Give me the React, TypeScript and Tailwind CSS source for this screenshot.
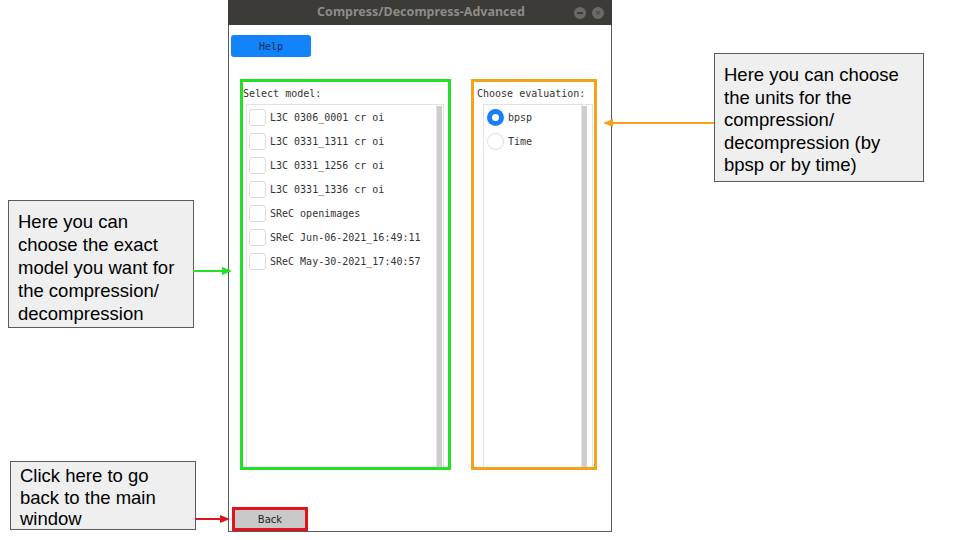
const models = [
  'L3C 0306_0001 cr oi',
  'L3C 0331_1311 cr oi',
  'L3C 0331_1256 cr oi',
  'L3C 0331_1336 cr oi',
  'SReC openimages',
  'SReC Jun-06-2021_16:49:11',
  'SReC May-30-2021_17:40:57',
];

const mono = { fontFamily: '"DejaVu Sans Mono", "Liberation Mono", monospace' };

const Note = ({ className, lines }: { className: string; lines: string[] }) => (
  <div
    className={`border border-[#5b5b5b] bg-[#efefef] px-[9px] text-[18.5px] text-black ${className}`}
    style={{ fontFamily: '"Liberation Sans", Arial, sans-serif' }}
  >
    {lines.map((l) => (
      <div key={l}>{l}</div>
    ))}
  </div>
);

const Arrow = ({
  className,
  color,
  width,
  left,
}: {
  className: string;
  color: string;
  width: number;
  left?: boolean;
}) => (
  <svg className={`absolute ${className}`} width={width} height={10} viewBox={`0 0 ${width} 10`}>
    {left ? (
      <>
        <line x1={8} y1={5} x2={width} y2={5} stroke={color} strokeWidth={2} />
        <polygon points={`0,5 10,1 10,9`} fill={color} />
      </>
    ) : (
      <>
        <line x1={0} y1={5} x2={width - 8} y2={5} stroke={color} strokeWidth={2} />
        <polygon points={`${width},5 ${width - 10},1 ${width - 10},9`} fill={color} />
      </>
    )}
  </svg>
);

export default function App() {
  return (
    <div className="relative flex h-[540px] w-[960px] overflow-hidden bg-white">
      <div className="flex w-[228px] shrink-0 flex-col">
        <Note
          className="ml-[8px] mt-[200px] h-[128px] w-[186px] pt-[9px] leading-[23px]"
          lines={['Here you can', 'choose the exact', 'model you want for', 'the compression/', 'decompression']}
        />
        <Note
          className="ml-[10px] mt-[133px] h-[69px] w-[186px] pt-[3px] leading-[21.5px]"
          lines={['Click here to go', 'back to the main', 'window']}
        />
      </div>

      <div className="flex h-[532px] w-[384px] shrink-0 flex-col border-x border-b border-[#5a5a5a]">
        <div className="-mx-px flex h-[25px] shrink-0 items-center bg-[#3c3b37]">
          <div
            className="flex-1 pl-[40px] text-center text-[12.5px] font-bold text-[#8d8c87]"
            style={{ fontFamily: '"Noto Sans", "DejaVu Sans", sans-serif' }}
          >
            Compress/Decompress-Advanced
          </div>
          <div className="mr-[8px] flex gap-[6px]">
            <div className="flex h-[12px] w-[12px] items-center justify-center rounded-full bg-[#6a6a65]">
              <div className="h-[2px] w-[6px] bg-[#3c3b37]" />
            </div>
            <div className="flex h-[12px] w-[12px] items-center justify-center rounded-full bg-[#6a6a65] text-[9px] leading-none text-[#3c3b37]">
              ×
            </div>
          </div>
        </div>

        <div className="flex flex-1 flex-col text-[10px] text-[#333]" style={mono}>
          <div className="ml-[2px] mt-[10px] flex h-[22px] w-[80px] items-center justify-center rounded-[3px] bg-[#1283fb] text-[#1c2a50]">
            Help
          </div>

          <div className="ml-[11px] mt-[22px] flex gap-[20px]">
            <div className="flex h-[391px] w-[211px] flex-col border-[3px] border-[#22e022]">
              <div className="pt-[6px] leading-[12px]">Select model:</div>
              <div className="ml-[3px] mr-[4px] mt-[4px] flex flex-1 border-x border-t border-[#e2e2e2]">
                <div className="flex flex-1 flex-col pl-[2px]">
                  {models.map((m) => (
                    <div key={m} className="flex h-[24px] items-center gap-[4px]">
                      <div className="h-[17px] w-[17px] rounded-[3px] border border-[#dcdcdc] bg-white" />
                      <span>{m}</span>
                    </div>
                  ))}
                </div>
                <div className="flex w-[7px] border-l border-[#e6e6e6] pt-[1px]">
                  <div className="w-[5px] bg-[#cdcdcd]" />
                </div>
              </div>
            </div>

            <div className="flex h-[391px] w-[126px] flex-col border-[3px] border-[#f5a11c]">
              <div className="pl-[3px] pt-[6px] leading-[12px]">Choose evaluation:</div>
              <div className="ml-[9px] mr-[1px] mt-[4px] flex flex-1 border-x border-t border-[#e2e2e2]">
                <div className="flex flex-1 flex-col pl-[3px]">
                  <div className="flex h-[24px] items-center gap-[4px]">
                    <div className="flex h-[17px] w-[17px] items-center justify-center rounded-full bg-[#1a7ff7]">
                      <div className="h-[7px] w-[7px] rounded-full bg-white" />
                    </div>
                    <span>bpsp</span>
                  </div>
                  <div className="flex h-[24px] items-center gap-[4px]">
                    <div className="h-[17px] w-[17px] rounded-full border border-[#dcdcdc] bg-white" />
                    <span>Time</span>
                  </div>
                </div>
                <div className="mr-[4px] flex w-[7px] border-l border-[#e6e6e6] pt-[1px]">
                  <div className="w-[5px] bg-[#cdcdcd]" />
                </div>
              </div>
            </div>
          </div>

          <div
            className="ml-[3px] mt-auto flex h-[24px] w-[76px] items-center justify-center border-[3px] border-[#e0121c] bg-[#c9c9c9] text-[10px] text-[#222]"
            style={{ fontFamily: '"DejaVu Sans", sans-serif' }}
          >
            Back
          </div>
        </div>
      </div>

      <div className="flex flex-1 flex-col">
        <Note
          className="ml-[102px] mt-[53px] h-[129px] w-[210px] pt-[10px] leading-[22.5px]"
          lines={['Here you can choose', 'the units for the', 'compression/', 'decompression (by', 'bpsp or by time)']}
        />
      </div>

      <Arrow className="left-[193px] top-[266px]" color="#22e022" width={39} />
      <Arrow className="left-[603px] top-[118px]" color="#f5a11c" width={111} left />
      <Arrow className="left-[195px] top-[514px]" color="#e0121c" width={35} />
    </div>
  );
}
